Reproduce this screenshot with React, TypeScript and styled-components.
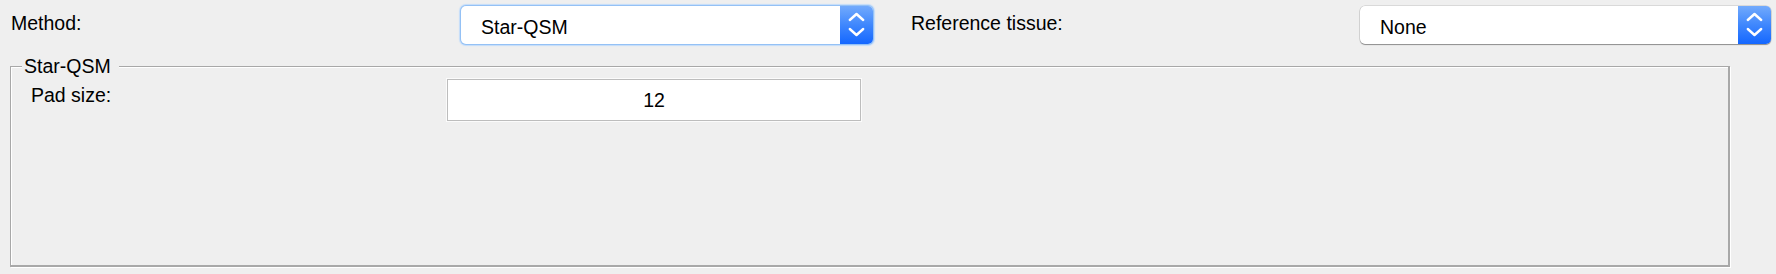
import React from "react";
import styled, { createGlobalStyle } from "styled-components";

const Global = createGlobalStyle`
  html, body {
    margin: 0;
    padding: 0;
    background: #efefef;
  }
  body {
    font-family: "Liberation Sans", Arial, Helvetica, sans-serif;
    font-size: 19.5px;
    color: #000;
  }
`;

const Page = styled.div`
  width: 1776px;
  height: 274px;
  background: #efefef;
  box-sizing: border-box;
  padding: 6px 0 0 0;
`;

const TopRow = styled.div`
  display: flex;
  gap: 38px;
  padding-left: 11px;
  height: 39px;
`;

const Field = styled.div`
  display: flex;
  align-items: flex-start;
`;

const Label = styled.div<{ $width: number }>`
  width: ${(p) => p.$width}px;
  flex: none;
  line-height: 22px;
  margin-top: 6px;
  white-space: nowrap;
`;

const Popup = styled.div<{ $width: number; $focused?: boolean }>`
  position: relative;
  width: ${(p) => p.$width}px;
  height: 38px;
  box-sizing: border-box;
  background: #fff;
  border-radius: 5px;
  display: flex;
  align-items: flex-start;
  box-shadow: ${(p) =>
    p.$focused
      ? "0 0 0 1px #94c1f5, 0 0 1px 2px #c2dcfa"
      : "0 1px 1px rgba(0,0,0,0.35), 0 0 0 0.5px rgba(0,0,0,0.18)"};
`;

const PopupText = styled.div`
  flex: 1;
  padding: 10px 0 0 20px;
  line-height: 22px;
  white-space: nowrap;
`;

const Stepper = styled.div`
  width: 33px;
  height: 100%;
  flex: none;
  border-radius: 0 5px 5px 0;
  background: linear-gradient(to bottom, #72aafc 0%, #3f87fd 50%, #1467ff 100%);
  display: flex;
  align-items: center;
  justify-content: center;
`;

const Group = styled.fieldset`
  margin: 10px 0 0 10px;
  width: 1720px;
  height: 212px;
  box-sizing: border-box;
  padding: 2px 0 0 11px;
  border-style: solid;
  border-color: #a8a8a8;
  border-width: 1px 2px 2px 1px;
  box-shadow: inset 1px 1px 0 #fff, 1px 1px 0 #fff;
  min-width: 0;
`;

const Legend = styled.legend`
  padding: 0 8px 0 2px;
  line-height: 22px;
  background: #efefef;
  font-size: 19.5px;
`;

const GroupRow = styled.div`
  display: flex;
  align-items: flex-start;
`;

const GroupLabel = styled.div`
  width: 416px;
  margin: 5px 0 0 9px;
  line-height: 22px;
  flex: none;
`;

const NumberBox = styled.div`
  width: 414px;
  height: 42px;
  box-sizing: border-box;
  background: #fff;
  border: 1px solid #bdbdbd;
  box-shadow: 0 0 0 1px #fbfbfb;
  display: flex;
  align-items: center;
  justify-content: center;
  line-height: 22px;
`;

const StepperIcon = () => (
  <svg width="33" height="38" viewBox="0 0 33 38" fill="none">
    <path
      d="M9.8 14 L16.5 8 L23.2 14"
      stroke="#fff"
      strokeWidth="2.4"
      strokeLinecap="round"
      strokeLinejoin="round"
    />
    <path
      d="M9.8 23 L16.5 29 L23.2 23"
      stroke="#fff"
      strokeWidth="2.4"
      strokeLinecap="round"
      strokeLinejoin="round"
    />
  </svg>
);

const PopupMenu = ({
  value,
  width,
  focused,
}: {
  value: string;
  width: number;
  focused?: boolean;
}) => (
  <Popup $width={width} $focused={focused}>
    <PopupText>{value}</PopupText>
    <Stepper>
      <StepperIcon />
    </Stepper>
  </Popup>
);

export default function App() {
  return (
    <>
      <Global />
      <Page>
        <TopRow>
          <Field>
            <Label $width={450}>Method:</Label>
            <PopupMenu value="Star-QSM" width={412} focused />
          </Field>
          <Field>
            <Label $width={449}>Reference tissue:</Label>
            <PopupMenu value="None" width={411} />
          </Field>
        </TopRow>
        <Group>
          <Legend>Star-QSM</Legend>
          <GroupRow>
            <GroupLabel>Pad size:</GroupLabel>
            <NumberBox>12</NumberBox>
          </GroupRow>
        </Group>
      </Page>
    </>
  );
}
